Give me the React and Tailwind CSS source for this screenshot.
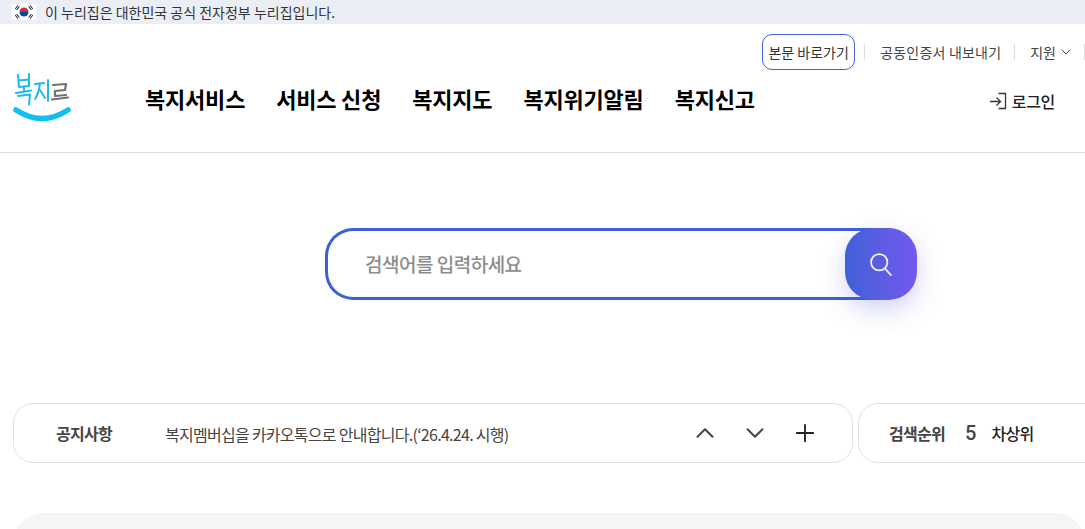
import { ChevronDown, ChevronUp, Plus } from "lucide-react";

const navItems = ["복지서비스", "서비스 신청", "복지지도", "복지위기알림", "복지신고"];

function Flag() {
  return (
    <svg width="24" height="16" viewBox="0 0 24 16" className="shrink-0">
      <rect width="24" height="16" fill="#fff" />
      <path d="M7.5 8a4.5 4.5 0 0 1 9 0z" fill="#cd2e3a" />
      <path d="M7.5 8a4.5 4.5 0 0 0 9 0z" fill="#0047a0" />
      <g stroke="#333" strokeWidth="1.2" strokeLinecap="round">
        <path d="M3.5 4.5l2-2.5M5 5.5l2-2.5" />
        <path d="M17 3l2 2.5M18.500 2l2 2.500" />
        <path d="M3.500 11.500l2 2.500M5 10.500l2 2.500" />
        <path d="M17 13l2-2.500M18.500 14l2-2.500" />
      </g>
    </svg>
  );
}

function Logo() {
  return (
    <svg width="62" height="54" viewBox="0 0 62 54" fill="none" strokeLinecap="round" strokeLinejoin="round">
      <g stroke="#22b8ec" strokeWidth="2">
        <path d="M6 3l1 12M17 2v12M6.500 8.500l10.500-1M7 15l10-1" />
        <path d="M12 15v4M4 21l15-2.500M6 24l12-1.500-1 10" />
        <path d="M23 12l9-1M28 12c-1 6-2 11-5 15M28 18l5 8" />
        <path d="M36 8v21" />
      </g>
      <path d="M41 13l13-1-1 6-10 1v5l11-1M40 27.500l16-2" stroke="#6f7276" strokeWidth="2.200" />
      <path d="M4 38Q30 55 56 38" stroke="#12bdf0" strokeWidth="5.500" />
    </svg>
  );
}

function LoginIcon() {
  return (
    <svg width="18" height="18" viewBox="0 0 18 18" fill="none" stroke="#333" strokeWidth="1.300" className="shrink-0">
      <path d="M1 9.500h10M7.500 5.500l4 4-4 4" />
      <path d="M9.500 1.500h7v15h-7" />
    </svg>
  );
}

function SearchIcon() {
  return (
    <svg width="28" height="28" viewBox="0 0 24 24" fill="none" stroke="#f4f2ff" strokeWidth="1.500" strokeLinecap="round">
      <circle cx="10.500" cy="10.500" r="7" />
      <path d="M15.500 16l5 5.500" />
    </svg>
  );
}

export default function App() {
  return (
    <div className="h-screen w-full overflow-hidden bg-white font-['Noto_Sans_CJK_KR','Noto_Sans',sans-serif] text-[#333]">
      <div className="flex h-6 items-center gap-[9px] bg-[#ebeff5] pl-3 text-[14px] text-[#333]">
        <Flag />
        <span>이 누리집은 대한민국 공식 전자정부 누리집입니다.</span>
      </div>

      <header className="h-[129px] border-b border-[#dedede]">
        <div className="flex h-[46px] items-end justify-end text-[14px] text-[#444]">
          <a className="flex h-9 w-[93px] items-center justify-center rounded-[10px] border border-[#3f62d6] text-[#333]">
            본문 바로가기
          </a>
          <span className="mb-[10px] ml-[9px] h-4 w-px bg-[#dcdcdc]" />
          <span className="mb-[8px] ml-[15px] leading-5 tracking-[0.2px]">공동인증서 내보내기</span>
          <span className="mb-[10px] ml-[13px] h-4 w-px bg-[#dcdcdc]" />
          <span className="mb-[8px] ml-[15px] flex items-center gap-[2px] leading-5">
            지원
            <ChevronDown size={16} strokeWidth={1.500} />
          </span>
          <span className="mb-[10px] ml-[10px] h-4 w-px bg-[#dcdcdc]" />
        </div>
        <div className="flex h-[56px] items-start pl-[12px]">
          <div className="mt-[2px]">
            <Logo />
          </div>
          <nav className="ml-[71px] mt-[11px] flex gap-[31px] text-[22px] leading-[34px] font-bold tracking-[-0.2px] text-black">
            {navItems.map((item) => (
              <a key={item}>{item}</a>
            ))}
          </nav>
          <a className="mt-[14px] ml-auto mr-[30px] flex items-center gap-[5px] text-[16px] leading-[34px] font-medium tracking-[-0.3px] text-[#222]">
            <LoginIcon />
            로그인
          </a>
        </div>
      </header>

      <div className="mt-[75px] ml-[325px] flex h-[72px] w-[592px]">
        <div className="flex h-full w-[560px] items-center rounded-l-[28px] border-[3px] border-r-0 border-[#3d60d6] pl-[37px] text-[19px] font-medium tracking-[-0.5px] text-[#8c8c8c]">
          검색어를 입력하세요
        </div>
        <button className="-ml-[40px] z-10 flex size-[72px] items-center justify-center rounded-[28px] bg-gradient-to-r from-[#3f60d6] to-[#7259ef] shadow-[0_10px_24px_rgba(80,80,220,0.25)]">
          <SearchIcon />
        </button>
      </div>

      <div className="mt-[103px] flex gap-[5px] pl-[13px]">
        <div className="flex h-[60px] w-[840px] shrink-0 items-center rounded-[20px] border border-[#e0e0e0] pl-[42px]">
          <strong className="w-[109px] text-[16px] font-bold tracking-[-0.7px] text-[#444]">공지사항</strong>
          <span className="pt-px text-[16px] tracking-[-0.72px] text-[#444]">복지멤버십을 카카오톡으로 안내합니다.(‘26.4.24. 시행)</span>
          <div className="ml-auto mr-[33px] flex items-center gap-[20px]">
            <ChevronUp size={30} strokeWidth={1.600} className="text-[#444]" />
            <ChevronDown size={30} strokeWidth={1.600} className="text-[#444]" />
            <Plus size={28} strokeWidth={1.600} className="ml-px text-[#222]" />
          </div>
        </div>
        <div className="flex h-[60px] w-[400px] shrink-0 items-center rounded-l-[20px] border border-[#e0e0e0] pl-[30px]">
          <strong className="text-[16px] font-bold tracking-[-0.7px] text-[#444]">검색순위</strong>
          <span className="ml-[20px] font-['Roboto',sans-serif] text-[20px] font-medium text-[#444]">5</span>
          <span className="ml-[15px] text-[16px] font-medium tracking-[-0.7px] text-[#222]">차상위</span>
        </div>
      </div>

      <div className="mt-[50px] ml-[13px] h-[40px] rounded-t-[30px] bg-[#f5f5f5]" />
    </div>
  );
}
